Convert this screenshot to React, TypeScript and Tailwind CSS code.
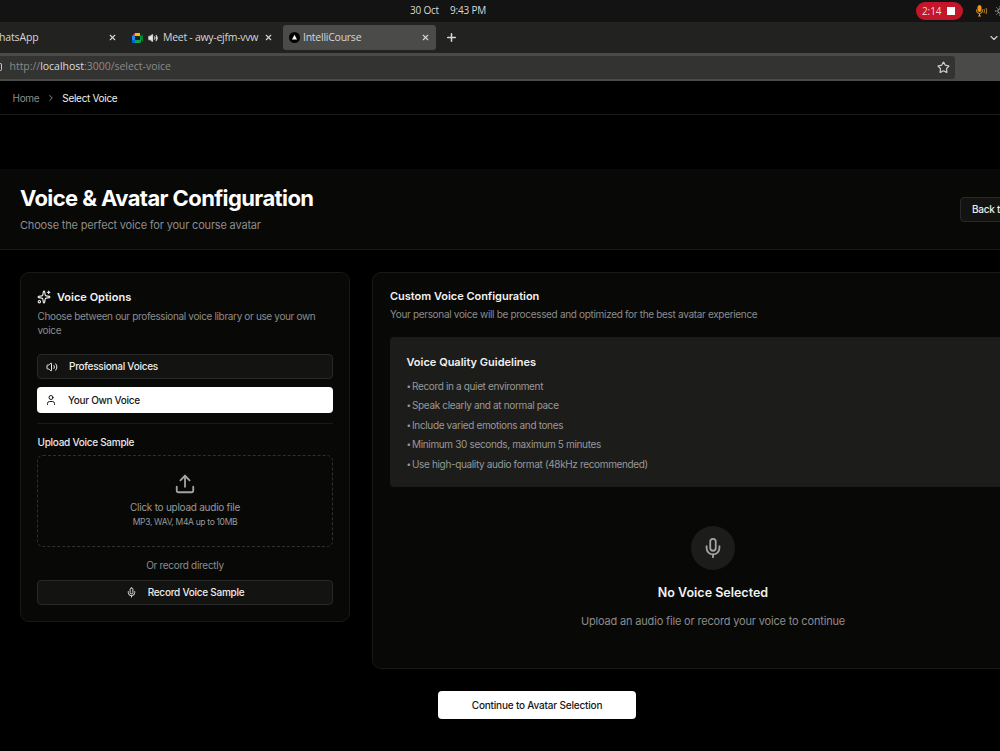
import type { ReactNode } from "react";
import { ChevronDown, ChevronRight, Mic, Plus, Sparkles, Star, Upload, User, Volume2, X } from "lucide-react";

const guidelines = [
  "Record in a quiet environment",
  "Speak clearly and at normal pace",
  "Include varied emotions and tones",
  "Minimum 30 seconds, maximum 5 minutes",
  "Use high-quality audio format (48kHz recommended)",
];

function SystemBar() {
  return (
    <div className="relative h-[22px] bg-[#131313] text-[10px] leading-[21px] text-[#d8d8d8]">
      <span className="absolute left-[410px] top-0 tracking-[-0.2px]">30 Oct</span>
      <span className="absolute left-[450px] top-0 tracking-[-0.2px]">9:43 PM</span>
      <div className="absolute left-[916px] top-[2px] flex h-[18px] w-[47px] items-center gap-[6px] rounded-full bg-[#c4162a] pl-[6px] text-[#f0d4d8]">
        <span className="w-[19px] tracking-[-0.1px]">2:14</span>
        <div className="size-[8px] bg-white" />
      </div>
      <svg className="absolute left-[975px] top-[5px]" width="13" height="12" viewBox="0 0 13 12" fill="none" stroke="#ee9a1c">
        <rect x="3" y="0.5" width="3" height="6" rx="1.5" fill="#ee9a1c" />
        <path d="M1.5 4.5v1a3 3 0 0 0 6 0v-1M4.5 9v2M3 11h3" />
        <path d="M9 4q1 1.700 0 4M11 3q1.500 2.500 0 6" strokeWidth="0.8" />
      </svg>
      <svg className="absolute left-[995px] top-[6px]" width="10" height="10" viewBox="0 0 10 10" fill="none" stroke="#b5b5b5">
        <circle cx="5" cy="5" r="2.200" />
        <path d="M0 5h1.500M1.500 1.500l1 1M1.500 8.500l1-1M5 0v1.500M5 8.500V10" />
      </svg>
    </div>
  );
}

function Tabs() {
  return (
    <div className="flex h-[31px] items-center bg-[#222220] text-[10.5px] text-[#d6d6d6]">
      <div className="flex w-[118px] items-center justify-between pr-px">
        <span className="-ml-px tracking-[-0.15px]">hatsApp</span>
        <X size={9} strokeWidth={3} />
      </div>
      <div className="flex w-[165px] items-center pl-[14px]">
        <svg width="11" height="10" viewBox="0 0 11 10">
          <path d="M3 0v3H0z" fill="#ea4335" />
          <path d="M0 3h3v4H0z" fill="#2684fc" />
          <path d="M0 7h3v3H1a1 1 0 0 1-1-1z" fill="#0066da" />
          <path d="M3 0h5v3H3z" fill="#ffba00" />
          <path d="M3 7h5V3l1-1v7L8 10H3z" fill="#00ac47" />
          <path d="M8 5l3-4v8z" fill="#00832d" />
        </svg>
        <Volume2 className="ml-[5px]" size={10} fill="#e8e8e8" strokeWidth={2.5} />
        <span className="ml-[5px] w-[96px] whitespace-nowrap tracking-[-0.27px]">Meet - awy-ejfm-vvw</span>
        <X className="ml-[5px]" size={9} strokeWidth={3} />
      </div>
      <div className="flex h-[25px] w-[153px] items-center rounded-[3px] bg-[#4b4b49] pl-[6px] pr-[6px]">
        <svg width="11" height="11" viewBox="0 0 11 11">
          <circle cx="5.500" cy="5.500" r="5.500" fill="#000" />
          <path d="M5.500 2.800L8 7.500H3z" fill="#fff" />
        </svg>
        <span className="ml-[3px] flex-1 tracking-[-0.25px]">IntelliCourse</span>
        <X size={9} strokeWidth={3} />
      </div>
      <Plus className="ml-[9px]" size={13} strokeWidth={2.8} />
      <ChevronDown className="ml-auto" size={12} strokeWidth={2.2} />
    </div>
  );
}

function AddressBar() {
  return (
    <div className="flex h-[28px] items-center bg-[#4a4a48]">
      <div className="flex h-[23px] w-[955px] items-center rounded-r-[3px] bg-[#333331] text-[10.5px]">
        <div className="h-[8px] w-[2px] rounded-r-sm border border-l-0 border-[#c8c8c8]" />
        <span className="ml-[7.5px] flex-1 tracking-[-0.02px] text-[#8b8b89]">
          http://<span className="text-[#dededc]">localhost</span>:3000/select-voice
        </span>
        <Star className="mr-[5px] text-[#cfcfcf]" size={13} strokeWidth={2.2} />
      </div>
    </div>
  );
}

function OutlineButton({ className, children }: { className: string; children: ReactNode }) {
  return (
    <button
      className={`flex h-[25px] items-center rounded-[4px] border border-[#282828] bg-[#131312] text-[10px] font-medium tracking-[-0.26px] text-[#ededed] ${className}`}
    >
      {children}
    </button>
  );
}

function VoiceOptions() {
  return (
    <section className="h-[350px] w-[330px] rounded-[9px] border border-[#191918] bg-[#080807] p-4">
      <div className="flex h-4 items-center gap-[6px]">
        <Sparkles size={14} className="text-[#e8e8e8]" />
        <h2 className="text-[11px] font-semibold text-[#f2f2f2]">Voice Options</h2>
      </div>
      <p className="mt-1 pl-[0.5px] text-[10px] leading-[14px] tracking-[-0.35px] text-[#8c8c8c]">
        Choose between our professional voice library or use your own voice
      </p>

      <OutlineButton className="mt-[17px] w-full pl-[8px]">
        <Volume2 size={12} />
        <span className="ml-[11px]">Professional Voices</span>
      </OutlineButton>
      <button className="mt-2 flex h-[26px] w-full items-center rounded-[4px] bg-white pl-[8px] text-[10px] font-medium tracking-[-0.3px] text-[#161616]">
        <User size={12} />
        <span className="ml-[11px]">Your Own Voice</span>
      </button>

      <div className="mt-[10px] h-px bg-[#1a1a19]" />

      <h3 className="mt-[11px] pl-[0.5px] text-[10px] font-medium leading-[14px] tracking-[-0.27px] text-[#e8e8e8]">
        Upload Voice Sample
      </h3>
      <div className="mt-[6px] flex h-[92px] flex-col items-center rounded-[6px] border border-dashed border-[#30302e] pt-[17px]">
        <Upload size={22} className="text-[#a3a3a3]" />
        <p className="mt-[5px] text-[10px] leading-[14px] tracking-[-0.25px] text-[#999]">Click to upload audio file</p>
        <p className="mt-px text-[8.5px] leading-[14px] tracking-[-0.33px] text-[#999]">MP3, WAV, M4A up to 10MB</p>
      </div>
      <p className="mt-[11px] text-center text-[10px] leading-[14px] tracking-[-0.3px] text-[#8c8c8c]">Or record directly</p>
      <OutlineButton className="mt-2 w-full justify-center">
        <Mic size={11} />
        <span className="ml-[11px]">Record Voice Sample</span>
      </OutlineButton>
    </section>
  );
}

function CustomVoice() {
  return (
    <section className="h-[397px] w-[682px] rounded-[9px] border border-[#191918] bg-[#080807] py-4 pl-[17px] pr-4">
      <h2 className="text-[11px] font-semibold leading-[14px] tracking-[-0.02px] text-[#f2f2f2]">Custom Voice Configuration</h2>
      <p className="mt-[3.5px] text-[10px] leading-[14px] tracking-[-0.32px] text-[#8c8c8c]">
        Your personal voice will be processed and optimized for the best avatar experience
      </p>

      <div className="mt-[16.5px] h-[150px] rounded-[4px] bg-[#1c1c1b] px-[16.5px] pt-[18px]">
        <h3 className="text-[11px] font-semibold leading-[15px] text-[#f2f2f2]">Voice Quality Guidelines</h3>
        <ul className="mt-[6.5px] text-[10px] leading-[19.5px] tracking-[-0.35px] text-[#989898]">
          {guidelines.map((item) => (
            <li key={item} className="flex">
              <span className="w-[5.5px] text-[8px]">•</span>
              {item}
            </li>
          ))}
        </ul>
      </div>

      <div className="mt-[39px] flex flex-col items-center pr-px">
        <div className="flex size-[44px] items-center justify-center rounded-full bg-[#1c1c1b]">
          <Mic size={22} className="text-[#a3a3a3]" />
        </div>
        <h3 className="mt-[14px] text-[12.5px] font-semibold leading-[17px] text-[#f2f2f2]">No Voice Selected</h3>
        <p className="mt-[12px] text-[11px] leading-[16px] tracking-[-0.17px] text-[#8c8c8c]">
          Upload an audio file or record your voice to continue
        </p>
      </div>
    </section>
  );
}

export default function App() {
  return (
    <div className="h-[751px] w-[1000px] overflow-hidden bg-black font-['Inter',sans-serif]">
      <div className="font-['Open_Sans',sans-serif]">
        <SystemBar />
        <Tabs />
        <AddressBar />
      </div>

      {/* the page is wider than the window and runs off its right edge */}
      <div className="w-[1074px]">
        <nav className="flex h-[34px] items-center border-b border-[#1b1b1b] pl-[12.5px] pt-px text-[10px] tracking-[-0.3px]">
          <span className="text-[#8c8c8c]">Home</span>
          <ChevronRight className="mx-[6.5px] text-[#a0a0a0]" size={10} />
          <span className="text-[#f0f0e8]">Select Voice</span>
        </nav>

        <header className="mt-[54px] flex h-[81px] items-center justify-between border-b border-[#191918] bg-[#080807] pl-[20px] pr-[20px]">
          <div className="pb-[2px]">
            <h1 className="text-[22px] font-bold leading-[28px] tracking-[-0.6px] text-white">
              Voice &amp; Avatar Configuration
            </h1>
            <p className="mt-[5px] text-[11px] leading-[16px] tracking-[-0.18px] text-[#8c8c8c]">
              Choose the perfect voice for your course avatar
            </p>
          </div>
          <OutlineButton className="w-[94px] pl-[11px] whitespace-nowrap">Back to Course</OutlineButton>
        </header>

        <main className="px-[20px] pt-[22px]">
          <div className="flex items-start gap-[22px]">
            <VoiceOptions />
            <CustomVoice />
          </div>
          <button className="mx-auto mt-[22px] flex h-[28px] w-[198px] items-center justify-center rounded-[4px] bg-white text-[10px] font-medium tracking-[-0.19px] text-[#161616]">
            Continue to Avatar Selection
          </button>
        </main>
      </div>
    </div>
  );
}
